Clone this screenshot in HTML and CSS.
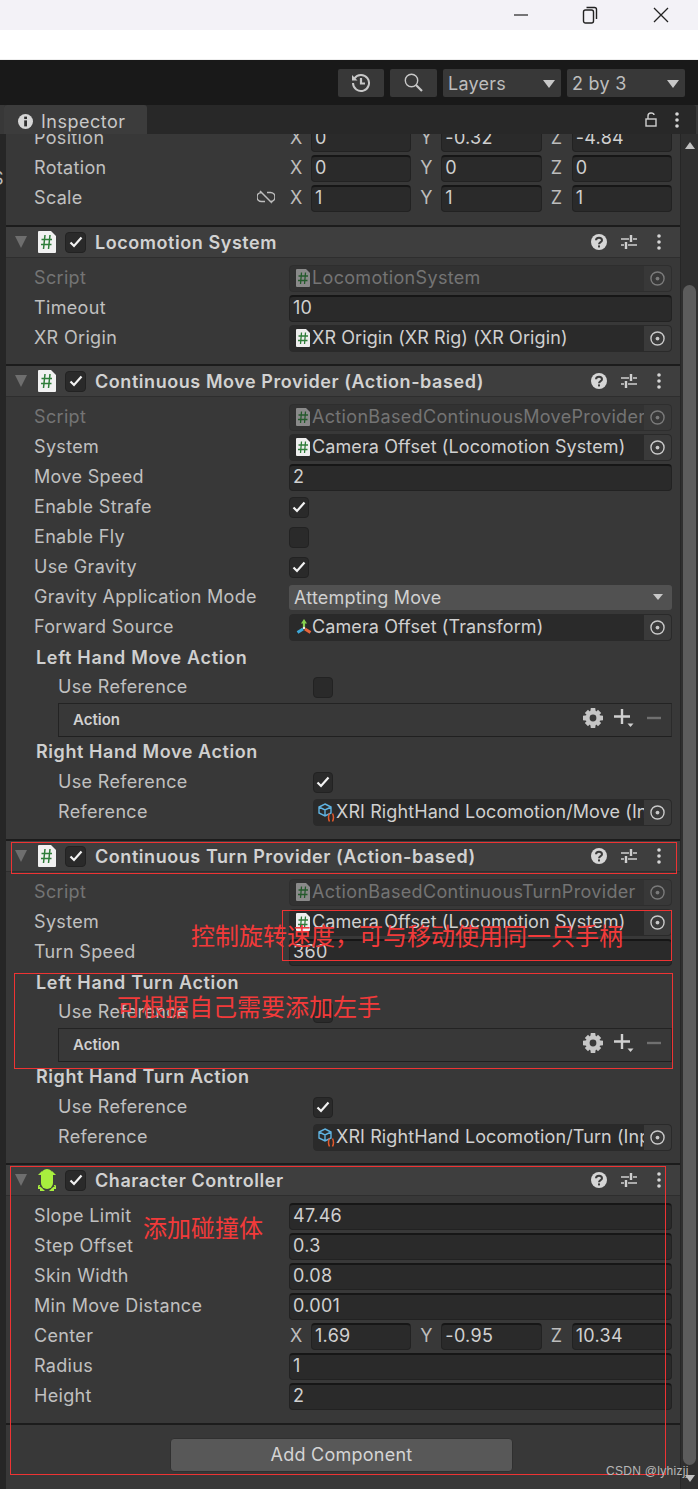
FILE: index.html
```html
<!DOCTYPE html>
<html lang="zh">
<head>
<meta charset="utf-8">
<title>Inspector</title>
<link rel="stylesheet" href="styles.css">
</head>
<body>
<svg class="defs" width="0" height="0" aria-hidden="true">
  <symbol id="script" viewBox="0 0 18 22"><path d="M1 0H13L18 5V21Q18 22 17 22H1Q0 22 0 21V1Q0 0 1 0Z" fill="#f1f1f1"/><path d="M7 4 5.5 18M12 4 10.5 18M3.5 8.5H14M3 13.5H13.5" stroke="#2f7d3a" stroke-width="1.5" fill="none"/></symbol>
  <symbol id="scriptsm" viewBox="0 0 14 18"><path d="M1 0H10L14 4V17Q14 18 13 18H1Q0 18 0 17V1Q0 0 1 0Z" fill="#eeeeee"/><path d="M5.5 3.5 4.5 15M9.5 3.5 8.5 15M2.5 7H12M2 11.5H11.5" stroke="#2f7d3a" stroke-width="1.3" fill="none"/></symbol>
  <symbol id="scriptdim" viewBox="0 0 14 18"><path d="M1 0H10L14 4V17Q14 18 13 18H1Q0 18 0 17V1Q0 0 1 0Z" fill="#8a8a8a"/><path d="M5.5 3.5 4.5 15M9.5 3.5 8.5 15M2.5 7H12M2 11.5H11.5" stroke="#245a2c" stroke-width="1.3" fill="none"/></symbol>
  <symbol id="check" viewBox="0 0 14 12"><path d="M1.5 6.5 5 10 12.5 1.5" fill="none" stroke="#f2f2f2" stroke-width="2.2"/></symbol>
  <symbol id="help" viewBox="0 0 16 16"><circle cx="8" cy="8" r="8" fill="#d6d6d6"/><path d="M5 6.2C5 2.8 11 2.8 11 6.2 11 8.2 8 8 8 10.3" fill="none" stroke="#3c3c3c" stroke-width="2"/><rect x="7" y="11.4" width="2" height="2" fill="#3c3c3c"/></symbol>
  <symbol id="sliders" viewBox="0 0 16 16"><path d="M0 5H8M12 5H16M0 11H3M7 11H16" stroke="#cfcfcf" stroke-width="1.5" fill="none"/><path d="M10 1V8M5 8V15" stroke="#cfcfcf" stroke-width="2.4" fill="none"/></symbol>
  <symbol id="dots" viewBox="0 0 4 16"><circle cx="2" cy="2" r="1.8" fill="#d6d6d6"/><circle cx="2" cy="8" r="1.8" fill="#d6d6d6"/><circle cx="2" cy="14" r="1.8" fill="#d6d6d6"/></symbol>
  <symbol id="target" viewBox="0 0 16 16"><circle cx="8" cy="8" r="7" fill="none" stroke="#c8c8c8" stroke-width="1.5"/><circle cx="8" cy="8" r="2" fill="#c8c8c8"/></symbol>
  <symbol id="targetdim" viewBox="0 0 16 16"><circle cx="8" cy="8" r="7" fill="none" stroke="#7a7a7a" stroke-width="1.5"/><circle cx="8" cy="8" r="2" fill="#7a7a7a"/></symbol>
  <symbol id="gear" viewBox="0 0 20 20"><g fill="#c6c6c6"><circle cx="10" cy="10" r="7.4"/><path d="M7.8 0H12.2L12.8 4H7.2ZM7.8 20H12.2L12.8 16H7.2ZM0 7.8V12.2L4 12.8V7.2ZM20 7.8V12.2L16 12.8V7.2Z"/><path d="M1.8 5 5 1.8 8 5 5 8ZM18.2 5 15 1.8 12 5 15 8ZM1.8 15 5 18.2 8 15 5 12ZM18.2 15 15 18.2 12 15 15 12Z"/></g><circle cx="10" cy="10" r="3.4" fill="#3a3a3a"/></symbol>
  <symbol id="plus" viewBox="0 0 20 20"><path d="M8 1V16M0 8.5H16" stroke="#d0d0d0" stroke-width="2.4" fill="none"/><path d="M13.5 15.5H19.5L16.5 19Z" fill="#d0d0d0"/></symbol>
  <symbol id="minus" viewBox="0 0 14 4"><path d="M0 2H14" stroke="#707070" stroke-width="2.4"/></symbol>
  <symbol id="pkg" viewBox="0 0 17 19"><path d="M7 1 13 4V10L7 13 1 10V4ZM1 4 7 7 13 4M7 7V13" fill="none" stroke="#5fb2e0" stroke-width="1.4"/><path d="M11.5 10.5Q9.5 14.5 11.5 18.5M14.5 10.5Q16.5 14.5 14.5 18.5" fill="none" stroke="#e2592c" stroke-width="1.5"/></symbol>
  <symbol id="axes" viewBox="0 0 16 16"><path d="M8 9V3" stroke="#86cf4e" stroke-width="2.2"/><path d="M8 0 11 4.5H5Z" fill="#86cf4e"/><path d="M7 10 1.5 13.5" stroke="#3ea8d8" stroke-width="3"/><path d="M9 10 14.5 13.5" stroke="#e5643a" stroke-width="3"/><circle cx="8" cy="9" r="1.2" fill="#eeeeee"/></symbol>
</svg>

<div class="page">
  <div class="winbar">
    <svg class="wincon" width="16" height="16" viewBox="0 0 16 16"><path d="M1 8H15" stroke="#222" stroke-width="1.2"/></svg>
    <svg class="wincon" width="16" height="20" viewBox="0 0 16 20"><rect x="1.5" y="5" width="10" height="13" rx="2" fill="none" stroke="#222" stroke-width="1.4"/><path d="M4.5 2.5H12.5Q14.5 2.5 14.5 4.5V14" fill="none" stroke="#222" stroke-width="1.4"/></svg>
    <svg class="wincon" width="18" height="18" viewBox="0 0 18 18"><path d="M2 2 16 16M16 2 2 16" stroke="#222" stroke-width="1.3"/></svg>
  </div>
  <div class="whitebar"></div>

  <div class="toolbar">
    <div class="tbtn"><svg width="20" height="20" viewBox="0 0 20 20"><path d="M3.4 5.5A8 8 0 1 1 2 10" fill="none" stroke="#c8c8c8" stroke-width="2"/><path d="M1 2V7.5H6.5Z" fill="#c8c8c8"/><path d="M10 5V10.5H14" fill="none" stroke="#c8c8c8" stroke-width="2.2"/></svg></div>
    <div class="tbtn search"><svg width="20" height="20" viewBox="0 0 20 20"><circle cx="7.5" cy="7.5" r="6.2" fill="none" stroke="#c8c8c8" stroke-width="1.4"/><path d="M12 12 18 18" stroke="#c8c8c8" stroke-width="2.2"/></svg></div>
    <div class="tdrop"><span>Layers</span><i class="tri"></i></div>
    <div class="tdrop"><span>2 by 3</span><i class="tri"></i></div>
  </div>

  <div class="tabbar">
    <div class="tab">
      <svg width="15" height="15" viewBox="0 0 16 16"><circle cx="8" cy="8" r="8" fill="#d6d6d6"/><rect x="6.6" y="6.8" width="3" height="6.4" fill="#2f2f2f"/><rect x="6.6" y="2.8" width="3" height="2.6" fill="#2f2f2f"/></svg>
      <span>Inspector</span>
    </div>
    <div class="tabtools">
      <svg width="12" height="15" viewBox="0 0 12 15"><rect x="1" y="7" width="10" height="7" fill="none" stroke="#cfcfcf" stroke-width="1.4"/><path d="M3 7V4Q3 1 6 1T9 3" fill="none" stroke="#cfcfcf" stroke-width="1.4"/></svg>
      <svg width="4" height="16"><use href="#dots"/></svg>
    </div>
  </div>

  <div class="body">
    <div class="gutter"><span class="gutter-s">S</span></div>
    <div class="content">
      <div class="scroller">
        <section class="sec first">
          <div class="row"><span class="lab">Position</span><div class="vec"><div class="vi"><b>X</b><span class="fld">0</span></div><div class="vi"><b>Y</b><span class="fld">-0.32</span></div><div class="vi"><b>Z</b><span class="fld">-4.84</span></div></div></div>
          <div class="row"><span class="lab">Rotation</span><div class="vec"><div class="vi"><b>X</b><span class="fld">0</span></div><div class="vi"><b>Y</b><span class="fld">0</span></div><div class="vi"><b>Z</b><span class="fld">0</span></div></div></div>
          <div class="row"><span class="lab labicon">Scale<svg width="18" height="14" viewBox="0 0 18 14"><path d="M5 2.5H4.5A4.5 4.5 0 0 0 4.5 11.5H8M10 2.5H13.5A4.5 4.5 0 0 1 13.5 11.5H13M3 1 15 13" fill="none" stroke="#bdbdbd" stroke-width="1.5"/></svg></span><div class="vec"><div class="vi"><b>X</b><span class="fld">1</span></div><div class="vi"><b>Y</b><span class="fld">1</span></div><div class="vi"><b>Z</b><span class="fld">1</span></div></div></div>
        </section>

        <section class="sec tight">
          <header class="hdr"><i class="fold"></i><svg class="hico" width="18" height="22"><use href="#script"/></svg><span class="cb on"><svg width="14" height="12"><use href="#check"/></svg></span><span class="title">Locomotion System</span><span class="hbtns"><svg width="16" height="16"><use href="#help"/></svg><svg class="hsl" width="16" height="16"><use href="#sliders"/></svg><svg width="4" height="16"><use href="#dots"/></svg></span></header>
          <div class="rows">
            <div class="row dim"><span class="lab">Script</span><div class="obj off"><svg width="14" height="18"><use href="#scriptdim"/></svg><span class="objt">LocomotionSystem</span><span class="pick"><svg width="15" height="15"><use href="#targetdim"/></svg></span></div></div>
            <div class="row"><span class="lab">Timeout</span><span class="fld wide">10</span></div>
            <div class="row"><span class="lab">XR Origin</span><div class="obj"><svg width="14" height="18"><use href="#scriptsm"/></svg><span class="objt">XR Origin (XR Rig) (XR Origin)</span><span class="pick"><svg width="15" height="15"><use href="#target"/></svg></span></div></div>
          </div>
        </section>

        <section class="sec">
          <header class="hdr"><i class="fold"></i><svg class="hico" width="18" height="22"><use href="#script"/></svg><span class="cb on"><svg width="14" height="12"><use href="#check"/></svg></span><span class="title">Continuous Move Provider (Action-based)</span><span class="hbtns"><svg width="16" height="16"><use href="#help"/></svg><svg class="hsl" width="16" height="16"><use href="#sliders"/></svg><svg width="4" height="16"><use href="#dots"/></svg></span></header>
          <div class="rows">
            <div class="row dim"><span class="lab">Script</span><div class="obj off"><svg width="14" height="18"><use href="#scriptdim"/></svg><span class="objt">ActionBasedContinuousMoveProvider</span><span class="pick"><svg width="15" height="15"><use href="#targetdim"/></svg></span></div></div>
            <div class="row"><span class="lab">System</span><div class="obj"><svg width="14" height="18"><use href="#scriptsm"/></svg><span class="objt">Camera Offset (Locomotion System)</span><span class="pick"><svg width="15" height="15"><use href="#target"/></svg></span></div></div>
            <div class="row"><span class="lab">Move Speed</span><span class="fld wide">2</span></div>
            <div class="row"><span class="lab">Enable Strafe</span><span class="cb on"><svg width="14" height="12"><use href="#check"/></svg></span></div>
            <div class="row"><span class="lab">Enable Fly</span><span class="cb"></span></div>
            <div class="row"><span class="lab">Use Gravity</span><span class="cb on"><svg width="14" height="12"><use href="#check"/></svg></span></div>
            <div class="row"><span class="lab">Gravity Application Mode</span><div class="drop"><span>Attempting Move</span><i class="tri"></i></div></div>
            <div class="row"><span class="lab">Forward Source</span><div class="obj"><svg width="16" height="16"><use href="#axes"/></svg><span class="objt ax">Camera Offset (Transform)</span><span class="pick"><svg width="15" height="15"><use href="#target"/></svg></span></div></div>
            <div class="hd">Left Hand Move Action</div>
            <div class="row sub"><span class="lab">Use Reference</span><span class="cb"></span></div>
            <div class="act"><span>Action</span><span class="acts"><svg width="20" height="20"><use href="#gear"/></svg><svg width="20" height="20"><use href="#plus"/></svg><svg width="14" height="4"><use href="#minus"/></svg></span></div>
            <div class="hd2">Right Hand Move Action</div>
            <div class="row sub"><span class="lab">Use Reference</span><span class="cb on"><svg width="14" height="12"><use href="#check"/></svg></span></div>
            <div class="row sub"><span class="lab">Reference</span><div class="obj ref"><svg width="17" height="19"><use href="#pkg"/></svg><span class="objt">XRI RightHand Locomotion/Move (Input Action)</span><span class="pick"><svg width="15" height="15"><use href="#target"/></svg></span></div></div>
          </div>
        </section>

        <section class="sec tight">
          <header class="hdr"><i class="fold"></i><svg class="hico" width="18" height="22"><use href="#script"/></svg><span class="cb on"><svg width="14" height="12"><use href="#check"/></svg></span><span class="title">Continuous Turn Provider (Action-based)</span><span class="hbtns"><svg width="16" height="16"><use href="#help"/></svg><svg class="hsl" width="16" height="16"><use href="#sliders"/></svg><svg width="4" height="16"><use href="#dots"/></svg></span></header>
          <div class="rows">
            <div class="row dim"><span class="lab">Script</span><div class="obj off"><svg width="14" height="18"><use href="#scriptdim"/></svg><span class="objt">ActionBasedContinuousTurnProvider</span><span class="pick"><svg width="15" height="15"><use href="#targetdim"/></svg></span></div></div>
            <div class="row"><span class="lab">System</span><div class="obj"><svg width="14" height="18"><use href="#scriptsm"/></svg><span class="objt">Camera Offset (Locomotion System)</span><span class="pick"><svg width="15" height="15"><use href="#target"/></svg></span></div></div>
            <div class="row"><span class="lab">Turn Speed</span><span class="fld wide">360</span></div>
            <div class="hd">Left Hand Turn Action</div>
            <div class="row sub"><span class="lab">Use Reference</span><span class="cb"></span></div>
            <div class="act"><span>Action</span><span class="acts"><svg width="20" height="20"><use href="#gear"/></svg><svg width="20" height="20"><use href="#plus"/></svg><svg width="14" height="4"><use href="#minus"/></svg></span></div>
            <div class="hd2">Right Hand Turn Action</div>
            <div class="row sub"><span class="lab">Use Reference</span><span class="cb on"><svg width="14" height="12"><use href="#check"/></svg></span></div>
            <div class="row sub"><span class="lab">Reference</span><div class="obj ref"><svg width="17" height="19"><use href="#pkg"/></svg><span class="objt">XRI RightHand Locomotion/Turn (Input Action)</span><span class="pick"><svg width="15" height="15"><use href="#target"/></svg></span></div></div>
          </div>
        </section>

        <section class="sec">
          <header class="hdr"><i class="fold"></i><svg class="hico" width="18" height="22" viewBox="0 0 18 22"><path d="M0 6 4 2V6ZM18 6 14 2V6ZM0 16 4 20H0ZM18 16 14 20H18Z" fill="#a8ef3e"/><path d="M0 16H2V22H7L4 19ZM18 16H16V22H11L14 19Z" fill="#a8ef3e"/><rect x="3" y="0" width="12" height="20" rx="6" fill="#a8ef3e"/></svg><span class="cb on"><svg width="14" height="12"><use href="#check"/></svg></span><span class="title">Character Controller</span><span class="hbtns"><svg width="16" height="16"><use href="#help"/></svg><svg class="hsl" width="16" height="16"><use href="#sliders"/></svg><svg width="4" height="16"><use href="#dots"/></svg></span></header>
          <div class="rows">
            <div class="row"><span class="lab">Slope Limit</span><span class="fld wide">47.46</span></div>
            <div class="row"><span class="lab">Step Offset</span><span class="fld wide">0.3</span></div>
            <div class="row"><span class="lab">Skin Width</span><span class="fld wide">0.08</span></div>
            <div class="row"><span class="lab">Min Move Distance</span><span class="fld wide">0.001</span></div>
            <div class="row"><span class="lab">Center</span><div class="vec"><div class="vi"><b>X</b><span class="fld">1.69</span></div><div class="vi"><b>Y</b><span class="fld">-0.95</span></div><div class="vi"><b>Z</b><span class="fld">10.34</span></div></div></div>
            <div class="row"><span class="lab">Radius</span><span class="fld wide">1</span></div>
            <div class="row"><span class="lab">Height</span><span class="fld wide">2</span></div>
          </div>
        </section>

        <div class="footer"><button class="add" type="button">Add Component</button></div>
      </div>
    </div>
    <div class="sbar"><i class="up"></i><div class="thumb"></div><i class="down"></i></div>
  </div>

  <div class="mark box1"></div>
  <div class="mark box2"></div>
  <div class="mark box3"></div>
  <div class="mark box4"></div>
  <div class="note note1">控制旋转速度，可与移动使用同一只手柄</div>
  <div class="note note2">可根据自己需要添加左手</div>
  <div class="note note3">添加碰撞体</div>
  <div class="wm">CSDN @lyhizjj</div>
</div>
</body>
</html>
```
FILE: styles.css
```css
* { box-sizing: border-box; }
html, body { margin: 0; padding: 0; background: #383838; }
body { font-family: Inter, "Noto Sans", sans-serif; font-size: 18px; color: #c6c6c6; }
.defs { position: absolute; }
svg { display: block; flex: none; }

.page { position: relative; width: 698px; height: 1489px; overflow: hidden; display: flex; flex-direction: column; }

.winbar { height: 30px; background: #f3f2f7; display: flex; justify-content: flex-end; align-items: center; flex: none; }
.wincon:nth-child(1) { margin-right: 53px; }
.wincon:nth-child(2) { margin-right: 54px; }
.wincon:nth-child(3) { margin-right: 28px; }
.whitebar { height: 30px; background: #fff; border-bottom: 1px solid #eee; flex: none; }

.toolbar { height: 45px; background: #191919; display: flex; justify-content: flex-end; align-items: center; gap: 6px; padding: 0 13px 0 0; flex: none; }
.tbtn { width: 46px; height: 28px; background: #383838; border-radius: 2px; display: flex; align-items: center; justify-content: center; }
.tbtn.search { width: 47px; }
.tdrop { width: 118px; height: 28px; background: #383838; border-radius: 2px; display: flex; align-items: center; justify-content: space-between; padding: 2px 5px 0; color: #bdbdbd; letter-spacing: 0.25px; }
.tri { display: block; width: 0; height: 0; border-left: 6px solid transparent; border-right: 6px solid transparent; border-top: 8px solid #c8c8c8; margin-right: 1px; }

.tabbar { height: 29px; background: #282828; margin-left: 4px; margin-right: 2px; border-radius: 3px 3px 0 0; display: flex; justify-content: space-between; flex: none; }
.tab { width: 143px; background: #3c3c3c; border-radius: 3px 3px 0 0; display: flex; align-items: center; gap: 8px; padding: 4px 0 0 14px; color: #c8c8c8; letter-spacing: 0.5px; }
.tabtools { display: flex; align-items: center; gap: 18px; padding: 0 17px 0 0; }

.body { flex: 1; display: flex; min-height: 0; }
.gutter { width: 6px; background: #262626; flex: none; position: relative; overflow: hidden; }
.gutter-s { position: absolute; left: -8px; top: 34px; color: #bbb; }
.content { flex: 1; min-width: 0; overflow: hidden; background: #383838; }
.scroller { margin-top: -11px; }
.sbar { width: 18px; flex: none; background: #2f2f2f; position: relative; border-left: 1px solid #262626; }
.thumb { position: absolute; left: 2px; top: 151px; width: 13px; height: 1180px; border-radius: 7px; background: #5c5c5c; }
.up, .down { position: absolute; left: 4px; width: 0; height: 0; border-left: 5px solid transparent; border-right: 5px solid transparent; }
.up { top: 8px; border-bottom: 7px solid #c0c0c0; }
.down { top: 1341px; border-top: 7px solid #c0c0c0; }

.sec { padding-bottom: 12px; border-bottom: 2px solid #1c1c1c; }
.sec.tight { padding-bottom: 11px; }
.hdr { height: 31px; background: #3e3e3e; border-bottom: 1px solid #2e2e2e; display: flex; align-items: center; padding: 0 0 0 9px; }
.fold { display: block; width: 0; height: 0; border-left: 6.5px solid transparent; border-right: 6.5px solid transparent; border-top: 12px solid #6e6e6e; margin-right: 11px; }
.hico { margin-right: 9px; }
.hdr .cb { margin-right: 9px; width: 21px; }
.title { flex: 1; font-weight: 600; color: #d2d2d2; letter-spacing: 0.56px; white-space: nowrap; }
.hbtns { display: flex; align-items: center; gap: 14px; padding-right: 19px; }
.hbtns .hsl { margin-right: 6px; }
.rows { padding-top: 5px; }

.row { height: 30px; display: flex; align-items: center; padding: 0 8px 0 28px; }
.row.sub { padding-left: 52px; }
.lab { width: 255px; flex: none; letter-spacing: 0.33px; color: #c0c0c0; white-space: nowrap; margin-top: -2px; }
.labicon { display: flex; align-items: center; justify-content: space-between; padding-right: 14px; }
.dim .lab { color: #747474; }

.vec { flex: 1; display: grid; grid-template-columns: repeat(3, 1fr); gap: 8px; }
.vi { display: flex; align-items: center; }
.vi b { width: 22px; font-weight: 400; padding-left: 1px; padding-bottom: 2px; color: #bdbdbd; flex: none; }
.fld { flex: 1; height: 27px; min-width: 0; background: #2a2a2a; border: 1px solid #222; border-top: 2px solid #161616; border-radius: 4px; padding: 0 3px; line-height: 22px; color: #d0d0d0; letter-spacing: 0.3px; }
.wide { padding-left: 3px; }

.obj { flex: 1; min-width: 0; height: 27px; background: #2a2a2a; border: 1px solid #2a2a2a; border-radius: 4px; display: flex; align-items: center; padding-left: 6px; color: #d0d0d0; overflow: hidden; }
.obj.ref { padding-left: 4px; }
.objt { flex: 1; min-width: 0; overflow: hidden; white-space: nowrap; letter-spacing: 0.1px; margin-left: 2px; line-height: 22px; }
.objt.ax { margin-left: 0; }
.obj.ref .objt { margin-left: 1px; }
.pick { width: 27px; height: 25px; background: #3a3a3a; flex: none; display: flex; align-items: center; justify-content: center; border-radius: 0 3px 3px 0; }
.obj.off { background: #323232; border-color: #2e2e2e; color: #747474; }
.obj.off .objt { letter-spacing: 0.33px; }
.obj.off .pick { background: #383838; }

.cb { width: 20px; height: 21px; background: #2a2a2a; border: 1px solid #222; border-radius: 4px; display: flex; align-items: center; justify-content: center; flex: none; }

.drop { flex: 1; height: 25px; background: #515151; border-radius: 3px; display: flex; align-items: center; justify-content: space-between; padding: 0 7px 0 5px; color: #d0d0d0; letter-spacing: 0.2px; }
.drop .tri { border-left-width: 5px; border-right-width: 5px; border-top-width: 6px; margin-right: 2px; }

.hd, .hd2 { height: 30px; padding-left: 30px; display: flex; align-items: center; font-weight: 600; color: #cfcfcf; letter-spacing: 0.66px; }
.hd { margin-top: 1px; height: 29px; }
.hd2 { padding-bottom: 1px; letter-spacing: 0.58px; }
.act { margin: 1px 8px 0 52px; height: 34px; border: 1px solid #232323; border-right-color: #2b2b2b; border-bottom-color: #202020; display: flex; align-items: center; justify-content: space-between; padding: 0 10px 2px 14px; font-size: 15px; font-weight: 600; color: #d0d0d0; }
.acts { display: flex; align-items: center; gap: 11px; margin-top: -2px; }
.acts svg:nth-child(2) { margin-right: 2px; }

.footer { padding-top: 13px; display: flex; padding-left: 164px; }
.add { width: 343px; height: 34px; background: #585858; border: 1px solid #303030; border-radius: 4px; color: #d4d4d4; font-family: inherit; font-size: 18px; letter-spacing: 0.25px; padding: 0 0 2px; }

.mark { position: absolute; border: 1px solid #ee3333; }
.box1 { left: 11px; top: 842px; width: 666px; height: 32px; }
.box2 { left: 282px; top: 910px; width: 390px; height: 51px; }
.box3 { left: 14px; top: 973px; width: 659px; height: 96px; }
.box4 { left: 10px; top: 1166px; width: 656px; height: 309px; }
.note { position: absolute; font-family: "Noto Sans CJK SC", sans-serif; font-size: 24px; line-height: 30px; color: #f23a3a; white-space: nowrap; font-weight: 400; }
.note1 { left: 191px; top: 920px; }
.note2 { left: 117px; top: 991px; }
.note3 { left: 143px; top: 1212px; }
.wm { position: absolute; left: 606px; top: 1463px; font-family: "Liberation Sans", sans-serif; font-size: 12px; line-height: 16px; color: #b8b8b8; letter-spacing: 0.3px; }
```
